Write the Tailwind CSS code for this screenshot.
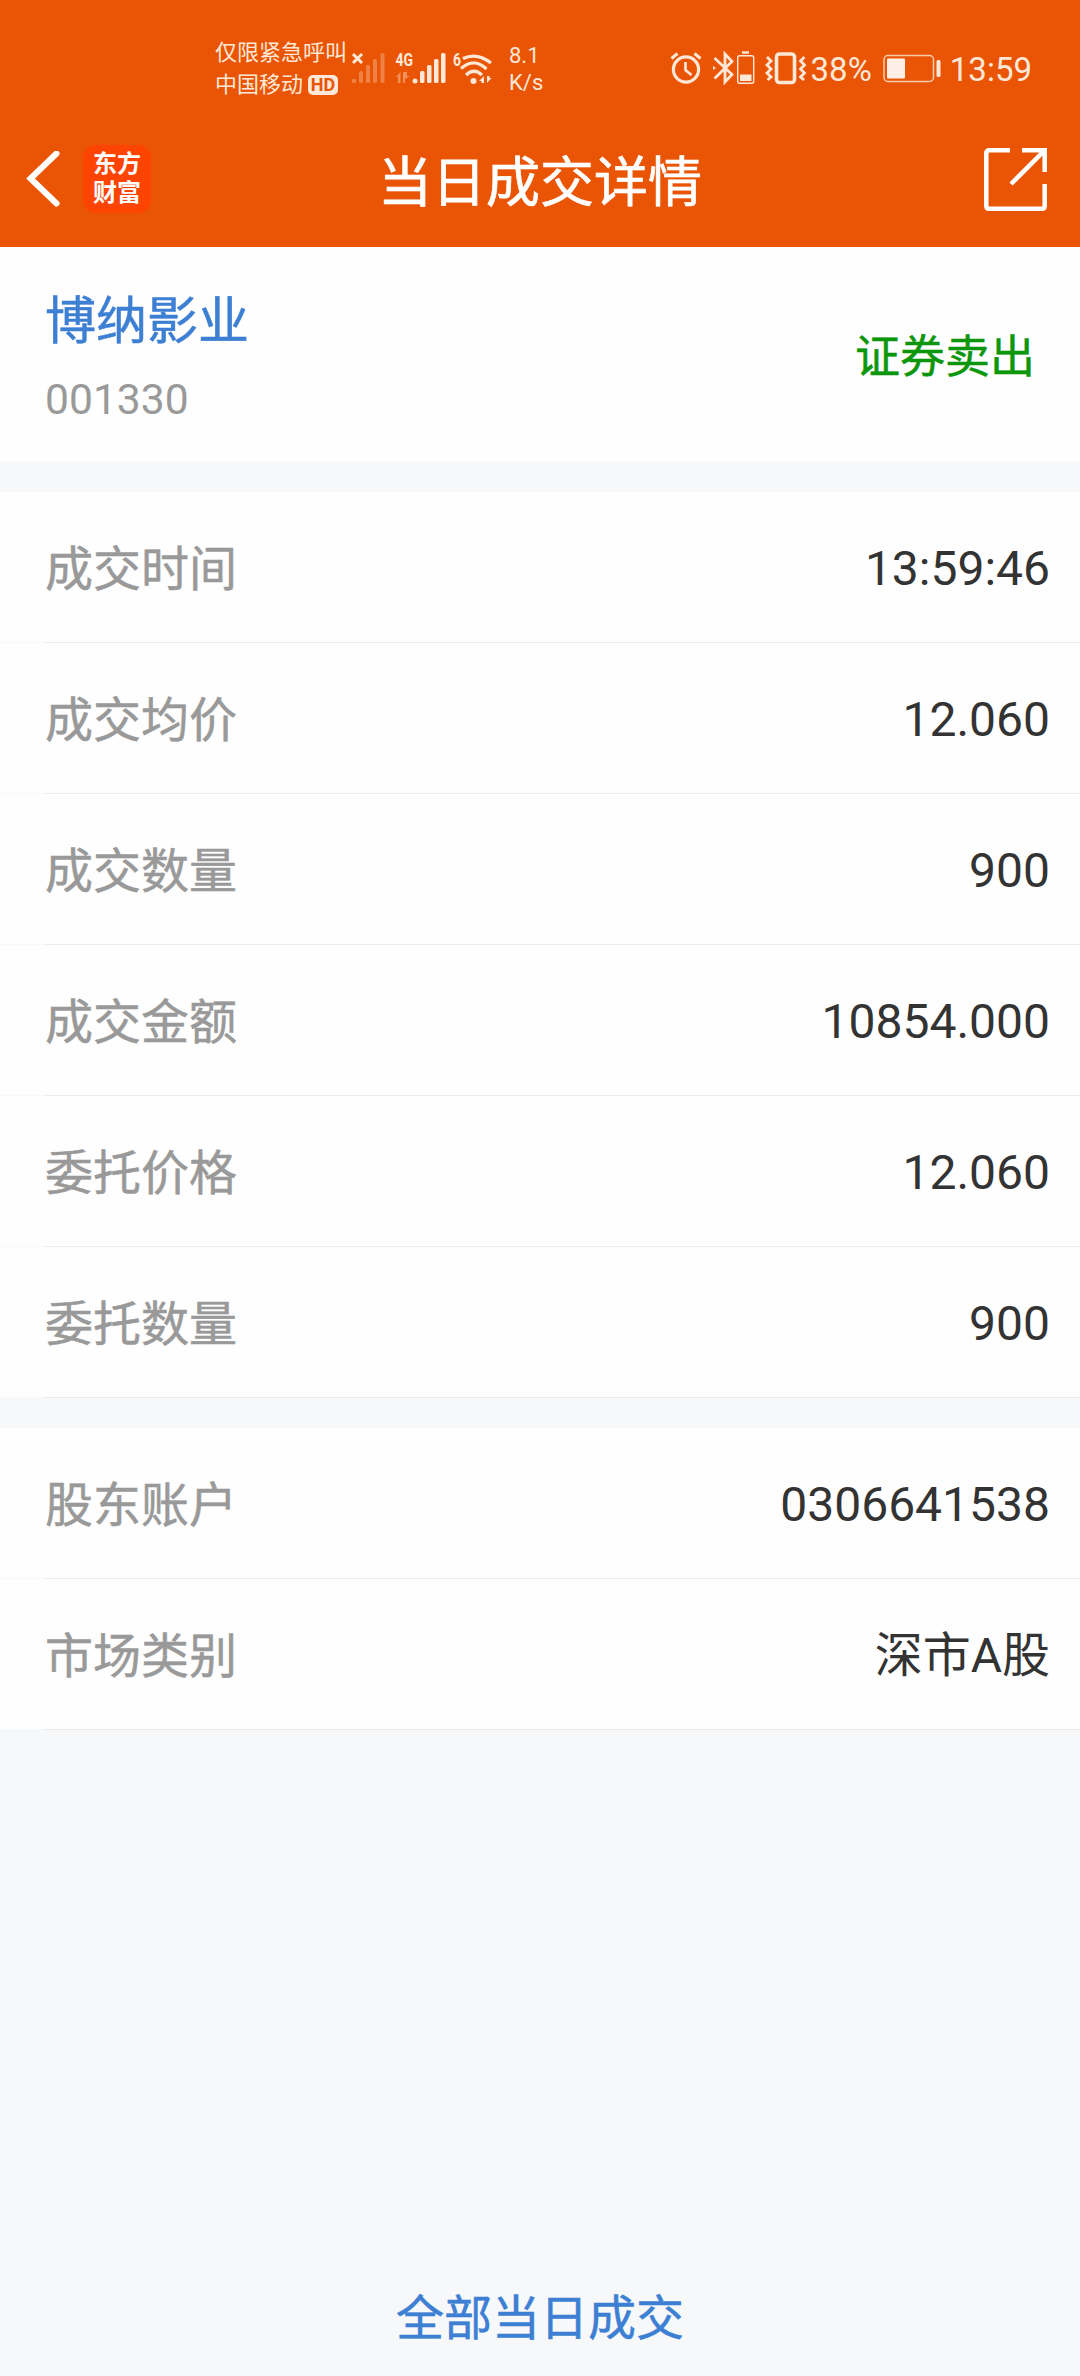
<!DOCTYPE html>
<html lang="zh-CN">
<head>
    <meta charset="UTF-8">
    <meta name="viewport" content="width=device-width, initial-scale=1.0">
    <title>当日成交详情</title>
    <script src="https://cdn.jsdelivr.net/npm/@tailwindcss/browser@4"></script>
</head>
<body class="bg-[#f6f8fa] font-[Roboto,'Noto_Sans_CJK_SC',sans-serif] text-[#333333]">
<div class="w-[1080px] h-[2376px] flex flex-col overflow-hidden">
    <header class="h-[247px] shrink-0 bg-[#e95504] text-white">
        <!-- 状态栏 -->
        <div class="h-[136px] pl-[215px] pr-[48px] flex items-center text-[#fde8d8]">
            <div class="w-[135px] pt-[2px] text-[22px] leading-[32px] whitespace-nowrap">
                <div>仅限紧急呼叫</div>
                <div class="flex items-center">
                    <span>中国移动</span>
                    <span class="ml-[5px] w-[30px] h-[20px] rounded-[5px] bg-[#fde8d8] text-[#e95504] text-[18px] leading-[20px] font-bold text-center">HD</span>
                </div>
            </div>
            <svg class="w-[36px] h-[36px]" viewBox="350 50 36 36" fill="currentColor">
                <path d="M353 54l9 9M362 54l-9 9" stroke="currentColor" stroke-width="3"/>
                <g opacity=".3">
                    <circle cx="354" cy="81" r="2.3"/>
                    <rect x="359" y="71" width="4" height="12" rx="1.5"/>
                    <rect x="366" y="65" width="4" height="18" rx="1.5"/>
                    <rect x="373" y="59" width="4" height="24" rx="1.5"/>
                    <rect x="380.5" y="53" width="4" height="30" rx="1.5"/>
                </g>
            </svg>
            <svg class="ml-[8px] w-[54px] h-[36px]" viewBox="394 50 54 36" fill="currentColor">
                <text x="395.5" y="66" font-size="18" font-weight="700" textLength="17.5" lengthAdjust="spacingAndGlyphs">4G</text>
                <path d="M400.500 83V72l-4.500 5h2v6zM403 72v11h2v-4l5-3h-3v-4z" opacity=".4"/>
                <circle cx="415" cy="81" r="2.5"/>
                <rect x="420" y="71" width="4.500" height="12" rx="1.5"/>
                <rect x="427" y="65" width="4.500" height="18" rx="1.5"/>
                <rect x="434" y="59" width="4.500" height="24" rx="1.5"/>
                <rect x="441" y="53" width="4.500" height="30" rx="1.5"/>
            </svg>
            <svg class="ml-[4px] w-[42px] h-[36px]" viewBox="452 50 42 36" fill="currentColor">
                <text x="453" y="66" font-size="18" font-weight="700" textLength="8" lengthAdjust="spacingAndGlyphs">6</text>
                <g fill="none" stroke="currentColor" stroke-width="3.2">
                    <path d="M463 58.500Q477 52 491 63"/>
                    <path d="M461 68.500Q474 57 486.500 69"/>
                    <path d="M466 75Q474 67.500 482 75"/>
                </g>
                <circle cx="473.500" cy="81" r="3"/>
                <path d="M484 83v-7l-5 5h2.500v2zM487 76v7l4.500-5h-2v-2z"/>
            </svg>
            <div class="ml-[15px] pt-[1px] text-[22px] leading-[27px]">
                <div>8.1</div>
                <div>K/s</div>
            </div>
            <div class="ml-auto flex items-center">
                <svg class="w-[138px] h-[36px]" viewBox="668 50 138 36" fill="none" stroke="currentColor">
                    <!-- 闹钟 -->
                    <circle cx="685" cy="69.500" r="12.600" stroke-width="3.200"/>
                    <path d="M684.500 62v8l6 5" stroke-width="2.700"/>
                    <path d="M670.500 58.500l6-5M699.500 58.500l-6-5" stroke-width="3"/>
                    <!-- 蓝牙 -->
                    <path d="M713.500 58L731 74.500L724 82V54L731 61.500L713.500 78.500" stroke-width="2.800"/>
                    <path d="M712 66l3 2-3 2z" fill="currentColor" stroke="none"/>
                    <rect x="736.700" y="55.700" width="16" height="27.500" rx="2" stroke-width="1.400"/>
                    <path d="M741 52.500h7" stroke-width="2.500"/>
                    <path d="M739 74.500h11.500v6.500H739z" fill="currentColor" stroke="none"/>
                    <!-- 振动 -->
                    <rect x="775.500" y="54" width="18" height="28.500" rx="3" stroke-width="3.600"/>
                    <path d="M766 57l4 4-4 4 4 4-4 4 4 4-3.500 3M803.500 57l-4 4 4 4-4 4 4 4-4 4 3.500 3" stroke-width="2.800"/>
                </svg>
                <span class="ml-[4px] pt-[2px] text-[33px] leading-none">38%</span>
                <svg class="ml-[10px] w-[60px] h-[36px]" viewBox="881 50 60 36">
                    <rect x="883" y="55.500" width="49.500" height="26" rx="4" fill="none" stroke="currentColor" stroke-width="1.500" opacity=".8"/>
                    <rect x="886" y="58.500" width="18" height="20" rx="1" fill="#fdeee6"/>
                    <rect x="935.500" y="60" width="4" height="17" rx="1.500" fill="currentColor"/>
                </svg>
                <span class="ml-[8px] pt-[2px] text-[33px] leading-none">13:59</span>
            </div>
        </div>
        <!-- 导航栏 -->
        <div class="h-[86px] px-[26px] flex items-center justify-between">
            <div class="w-[160px] flex items-center">
                <svg class="w-[34px] h-[56px]" viewBox="26 152 34 56" fill="none" stroke="currentColor" stroke-width="6">
                    <path d="M56.500 154.500L30.500 179.500L56.500 204.500" stroke-linecap="round"/>
                </svg>
                <div class="ml-[23px] w-[68px] h-[68px] rounded-[13px] bg-[#fe4402] pt-[5px] text-[24px] leading-[29px] font-bold text-center">
                    <div>东方</div>
                    <div>财富</div>
                </div>
            </div>
            <h1 class="pt-[10px] text-[54px] leading-none [-webkit-text-stroke:0.7px_currentColor]">当日成交详情</h1>
            <div class="w-[160px] flex justify-end pr-[7px]">
                <svg class="w-[63px] h-[63px]" viewBox="0 0 63 63" fill="none" stroke="currentColor" stroke-width="4.500">
                    <path d="M26 2.300H5Q2.300 2.300 2.300 5V58Q2.300 60.700 5 60.700H58Q60.700 60.700 60.700 58V36"/>
                    <path d="M38 2.300H60.700V24M60 3L27 36"/>
                </svg>
            </div>
        </div>
    </header>

    <section class="h-[215px] shrink-0 bg-[#fefefe] px-[45px] flex items-center justify-between">
        <div class="pt-[4px]">
            <div class="pt-[2px] text-[51px] leading-[76px] text-[#3c7fd3] [-webkit-text-stroke:0.5px_currentColor]">博纳影业</div>
            <div class="mt-[7px] text-[42.6px] leading-[64px] text-[#999999]">001330</div>
        </div>
        <div class="pt-[6px] text-[45px] text-[#0c960c] [-webkit-text-stroke:0.5px_currentColor]">证券卖出</div>
    </section>

    <section id="dealList" class="mt-[30px] shrink-0"></section>
    <section id="accountList" class="mt-[30px] shrink-0"></section>

    <footer class="mt-auto h-[114px] shrink-0 text-center text-[48px] leading-[114px] text-[#3c7fd3] [-webkit-text-stroke:0.5px_currentColor]">全部当日成交</footer>
</div>

<script>
    const deals = [
        ['成交时间', '13:59:46'],
        ['成交均价', '12.060'],
        ['成交数量', '900'],
        ['成交金额', '10854.000'],
        ['委托价格', '12.060'],
        ['委托数量', '900'],
    ];
    const account = [
        ['股东账户', '0306641538'],
        ['市场类别', '深市A股'],
    ];

    // 渲染明细行
    function renderRows(id, rows) {
        document.getElementById(id).innerHTML = rows.map(([label, value]) => `
            <div class="h-[150px] bg-[#fefefe] pt-[4px] pl-[45px] pr-[30px] flex items-center justify-between text-[48px]">
                <span class="pt-[2px] text-[#999999] [-webkit-text-stroke:0.5px_currentColor]">${label}</span>
                <span>${value}</span>
            </div>
            <div class="ml-[45px] h-px bg-[#ebebeb]"></div>
        `).join('');
    }

    renderRows('dealList', deals);
    renderRows('accountList', account);
</script>
</body>
</html>
